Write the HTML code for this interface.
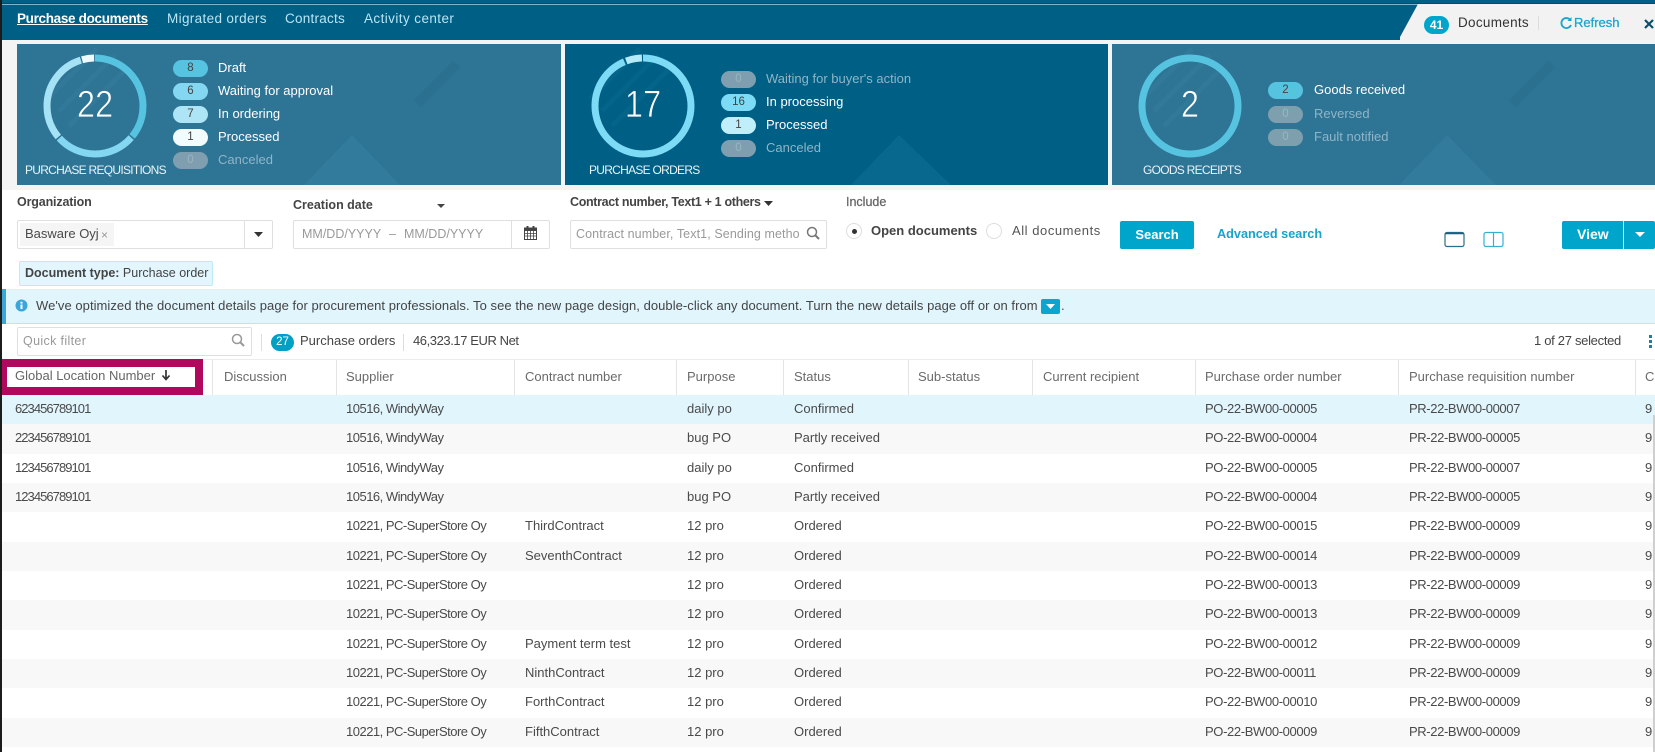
<!DOCTYPE html>
<html><head><meta charset="utf-8"><title>Purchase documents</title>
<style>
*{box-sizing:border-box}
html,body{margin:0;padding:0;width:1655px;height:752px;overflow:hidden;background:#fff}
body{font-family:"Liberation Sans",sans-serif;font-size:13px;color:#4a4a4a;position:relative}
.a,.t{position:absolute;white-space:nowrap}
.t{line-height:18px}
.panel{position:absolute;top:44px;height:141px;overflow:hidden}
.pill{position:absolute;width:35px;height:17px;border-radius:9px;text-align:center;font-size:11.5px;line-height:17px;color:#444}
.lb{position:absolute;font-size:13px;line-height:18px;color:#fff;white-space:nowrap}
.off{color:#8fb5c6}
.poff{background:#7f9fb0;color:#98b4c2}
.poff2{background:#7e9fae;color:#9cb6c3}
.big{position:absolute;width:104px;text-align:center;font-size:38px;line-height:44px;color:#fff;transform:scaleX(.86);-webkit-text-stroke:.7px #2e7495}
.cap{position:absolute;font-size:12px;line-height:16px;color:#e8f4f8;white-space:nowrap;letter-spacing:-.72px}
.b{font-weight:bold}
.inp{position:absolute;border:1px solid #dfdfdf;border-radius:2px;background:#fff}
.ph{color:#999}
.row{position:absolute;left:2px;width:1653px;height:29.33px;line-height:27px}
.row span{position:absolute;white-space:nowrap;top:0}
.c1{left:13px;letter-spacing:-.95px}.c2{left:344px;letter-spacing:-.5px}.c3{left:523px}.c4{left:685px}.c5{left:792px}.c6{left:1203px;letter-spacing:-.36px}.c7{left:1407px;letter-spacing:-.38px}.c8{left:1643px}
.alt{background:#f8f8f8}
.hd{position:absolute;top:360px;height:35px;line-height:33px;color:#6a6a6a;white-space:nowrap}
.sep{position:absolute;top:360px;height:35px;width:1px;background:#e4e4e4}
.btn{position:absolute;background:#00a5cc;color:#fff;font-weight:bold;text-align:center;border-radius:2px;font-size:13px;line-height:28px}
</style></head><body>

<!-- top header -->
<div class="a" style="left:0;top:0;width:1655px;height:40px;background:#005f85"></div>
<div class="a" style="left:0;top:3px;width:1655px;height:1px;background:#0a4a66"></div>
<div class="a" style="left:0;top:4px;width:1655px;height:1px;background:#7fb4c9"></div>
<div class="t b" style="left:17px;top:10px;color:#fff;font-size:13.5px;letter-spacing:-.32px;text-decoration:underline">Purchase documents</div>
<div class="t" style="left:167px;top:10px;color:#b8e6f5;font-size:13.5px;letter-spacing:.35px">Migrated orders</div>
<div class="t" style="left:285px;top:10px;color:#b8e6f5;font-size:13.5px;letter-spacing:.25px">Contracts</div>
<div class="t" style="left:364px;top:10px;color:#b8e6f5;font-size:13.5px;letter-spacing:.42px">Activity center</div>
<svg class="a" style="left:1395px;top:4px" width="260" height="36"><polygon points="23,0 260,0 260,36 5,36 5,33" fill="#f2f2f2"/></svg>
<div class="a" style="left:1424px;top:16px;width:25px;height:18px;border-radius:9px;background:#00a5cc;color:#fff;font-size:12px;font-weight:bold;text-align:center;line-height:18px">41</div>
<div class="t" style="left:1458px;top:14px;color:#333;font-size:13.5px;letter-spacing:.3px">Documents</div>
<div class="a" style="left:1538px;top:16px;width:1px;height:14px;background:#ddd"></div>
<svg class="a" style="left:1559px;top:16px" width="14" height="14" viewBox="0 0 14 14"><path d="M11 3.6A5 5 0 1 0 12 9" fill="none" stroke="#1ba5cc" stroke-width="1.8"/><path d="M12.5 1v4h-4z" fill="#1ba5cc"/></svg>
<div class="t" style="left:1574px;top:14px;color:#1ba5cc;font-size:13px;-webkit-text-stroke:.3px #1ba5cc">Refresh</div>
<svg class="a" style="left:1644px;top:19px" width="10" height="10"><path d="M1 1L9 9M9 1L1 9" stroke="#0f4f6e" stroke-width="2.2"/></svg>

<!-- panels bg -->
<div class="a" style="left:0;top:40px;width:1655px;height:150px;background:#f4f4f4"></div>

<div class="panel" style="left:17px;width:544px;background:#2e7495">
 <svg class="a" style="left:0;top:0" width="544" height="141">
  <polygon points="335,91 383,141 287,141" fill="#327b9c"/>
  <path d="M400 60L440 20" stroke="#2c7090" stroke-width="10"/>
  <g stroke="#327999" stroke-width="5"><path d="M30 55L80 5"/><path d="M42 67L98 11"/><path d="M52 82L108 26"/></g>
  <g fill="none" stroke-width="7" transform="rotate(-90 78 62)">
   <circle cx="78" cy="62" r="48" stroke="#56c3e0" stroke-dasharray="108.2 193.4" stroke-dashoffset="0"/>
   <circle cx="78" cy="62" r="48" stroke="#83d7f1" stroke-dasharray="81 220.6" stroke-dashoffset="-109.7"/>
   <circle cx="78" cy="62" r="48" stroke="#a6e2f5" stroke-dasharray="94.5 207.1" stroke-dashoffset="-192.2"/>
   <circle cx="78" cy="62" r="48" stroke="#eef9fd" stroke-dasharray="12.2 289.4" stroke-dashoffset="-288"/>
  </g>
 </svg>
 <div class="big" style="left:26px;top:39px">22</div>
 <div class="cap" style="left:8px;top:118px">PURCHASE REQUISITIONS</div>
 <div class="pill" style="left:156px;top:16px;background:#56c3e0">8</div><div class="lb" style="left:201px;top:15px">Draft</div>
 <div class="pill" style="left:156px;top:39px;background:#83d7f1">6</div><div class="lb" style="left:201px;top:38px">Waiting for approval</div>
 <div class="pill" style="left:156px;top:62px;background:#aee5f6">7</div><div class="lb" style="left:201px;top:61px">In ordering</div>
 <div class="pill" style="left:156px;top:85px;background:#f2fbfe">1</div><div class="lb" style="left:201px;top:84px">Processed</div>
 <div class="pill poff" style="left:156px;top:108px">0</div><div class="lb off" style="left:201px;top:107px">Canceled</div>
</div>

<div class="panel" style="left:565px;width:543px;background:#005f85">
 <svg class="a" style="left:0;top:0" width="543" height="141">
  <polygon points="334,91 386,141 286,141" fill="#08688d"/>
  <g stroke="#056489" stroke-width="5"><path d="M25 55L75 5"/><path d="M37 67L93 11"/><path d="M47 82L103 26"/></g>
  <g fill="none" stroke-width="7" transform="rotate(-90 78 62)">
   <circle cx="78" cy="62" r="48" stroke="#7ddbf5" stroke-dasharray="282 19.6" stroke-dashoffset="0"/>
   <circle cx="78" cy="62" r="48" stroke="#b5ebf9" stroke-dasharray="16 285.6" stroke-dashoffset="-284"/>
  </g>
 </svg>
 <div class="big" style="left:26px;top:39px;-webkit-text-stroke-color:#005f85">17</div>
 <div class="cap" style="left:24px;top:118px">PURCHASE ORDERS</div>
 <div class="pill poff" style="left:156px;top:27px">0</div><div class="lb off" style="left:201px;top:26px">Waiting for buyer's action</div>
 <div class="pill" style="left:156px;top:50px;background:#7ddbf5">16</div><div class="lb" style="left:201px;top:49px">In processing</div>
 <div class="pill" style="left:156px;top:73px;background:#c0eefa">1</div><div class="lb" style="left:201px;top:72px">Processed</div>
 <div class="pill poff" style="left:156px;top:96px">0</div><div class="lb off" style="left:201px;top:95px">Canceled</div>
</div>

<div class="panel" style="left:1112px;width:543px;background:#2e7495">
 <svg class="a" style="left:0;top:0" width="543" height="141">
  <polygon points="335,91 384,141 287,141" fill="#327b9c"/>
  <path d="M400 60L440 20" stroke="#2c7090" stroke-width="10"/>
  <g stroke="#327999" stroke-width="5"><path d="M30 55L80 5"/><path d="M42 67L98 11"/><path d="M52 82L108 26"/></g>
  <circle cx="78" cy="62" r="48" fill="none" stroke="#56c3e0" stroke-width="7"/>
 </svg>
 <div class="big" style="left:26px;top:39px">2</div>
 <div class="cap" style="left:31px;top:118px">GOODS RECEIPTS</div>
 <div class="pill" style="left:156px;top:38px;background:#56c3e0">2</div><div class="lb" style="left:202px;top:37px">Goods received</div>
 <div class="pill poff2" style="left:156px;top:62px">0</div><div class="lb off" style="left:202px;top:61px">Reversed</div>
 <div class="pill poff2" style="left:156px;top:85px">0</div><div class="lb off" style="left:202px;top:84px">Fault notified</div>
</div>

<!-- filters -->
<div class="t b" style="left:17px;top:193px;color:#444;font-size:12.5px;letter-spacing:-.15px">Organization</div>
<div class="inp" style="left:17px;top:220px;width:256px;height:29px"></div>
<div class="a" style="left:20px;top:223px;width:94px;height:23px;background:#f5f5f5"></div>
<div class="t" style="left:25px;top:225px">Basware Oyj</div>
<div class="t" style="left:101px;top:226px;color:#999;font-size:12px">×</div>
<div class="a" style="left:244px;top:221px;width:1px;height:27px;background:#dfdfdf"></div>
<svg class="a" style="left:254px;top:232px" width="9" height="5"><path d="M0 0H9L4.5 5z" fill="#333"/></svg>

<div class="t b" style="left:293px;top:196px;color:#444;font-size:12.5px">Creation date</div>
<svg class="a" style="left:437px;top:204px" width="8" height="4"><path d="M0 0H8L4 4z" fill="#444"/></svg>
<div class="inp" style="left:293px;top:220px;width:257px;height:29px"></div>
<div class="t ph" style="left:302px;top:225px;font-size:12.5px">MM/DD/YYYY</div>
<div class="t ph" style="left:389px;top:225px;font-size:12.5px">–</div>
<div class="t ph" style="left:404px;top:225px;font-size:12.5px">MM/DD/YYYY</div>
<div class="a" style="left:511px;top:221px;width:1px;height:27px;background:#dfdfdf"></div>
<svg class="a" style="left:524px;top:226px" width="13" height="14" viewBox="0 0 13 14"><rect x=".5" y="2" width="12" height="11.5" fill="#fff" stroke="#444"/><rect x="0" y="2" width="13" height="3" fill="#444"/><rect x="2.5" y="0" width="2" height="3" fill="#444"/><rect x="8.5" y="0" width="2" height="3" fill="#444"/><path d="M1 7.500H12M1 10H12M3.500 5V13M6.500 5V13M9.500 5V13" stroke="#444" stroke-width=".8"/></svg>

<div class="t b" style="left:570px;top:193px;color:#444;font-size:12.5px;letter-spacing:-.33px">Contract number, Text1 + 1 others</div>
<svg class="a" style="left:764px;top:201px" width="9" height="5"><path d="M0 0H9L4.5 5z" fill="#333"/></svg>
<div class="inp" style="left:570px;top:220px;width:257px;height:29px"></div>
<div class="t ph" style="left:576px;top:225px;width:225px;overflow:hidden;font-size:12.5px;letter-spacing:.1px">Contract number, Text1, Sending metho</div>
<svg class="a" style="left:806px;top:226px" width="14" height="14"><circle cx="6" cy="6" r="4.500" fill="none" stroke="#777" stroke-width="1.500"/><path d="M9.500 9.500L13 13" stroke="#777" stroke-width="2"/></svg>

<div class="t" style="left:846px;top:193px;color:#666;font-size:12.5px;-webkit-text-stroke:.25px #666">Include</div>
<div class="a" style="left:846px;top:223px;width:16px;height:16px;border:1px solid #ddd;border-radius:50%"></div>
<div class="a" style="left:851.500px;top:228.500px;width:5px;height:5px;background:#333;border-radius:50%"></div>
<div class="t b" style="left:871px;top:222px;color:#444;font-size:13px">Open documents</div>
<div class="a" style="left:986px;top:223px;width:16px;height:16px;border:1px solid #ddd;border-radius:50%"></div>
<div class="t" style="left:1012px;top:222px;color:#555;font-size:13px;letter-spacing:.55px">All documents</div>

<div class="btn" style="left:1120px;top:221px;width:74px;height:28px">Search</div>
<div class="t b" style="left:1217px;top:225px;color:#1ba2c9;font-size:12.7px">Advanced search</div>
<svg class="a" style="left:1444px;top:231px" width="21" height="17"><rect x="1" y="1.500" width="19" height="14" rx="2" fill="none" stroke="#2d6b8a" stroke-width="1.200"/><path d="M1 2.500H20" stroke="#1d5c7e" stroke-width="1.500"/></svg>
<svg class="a" style="left:1483px;top:231px" width="21" height="17"><rect x="1" y="1.500" width="19" height="14" rx="2" fill="none" stroke="#35b0d0" stroke-width="1.200"/><path d="M10.500 1.500V15.500" stroke="#35b0d0" stroke-width="1.200"/></svg>
<div class="btn" style="left:1562px;top:221px;width:93px;height:28px"></div>
<div class="t b" style="left:1577px;top:225px;color:#fff;font-size:14px">View</div>
<div class="a" style="left:1623px;top:221px;width:1px;height:28px;background:#e8f8fc"></div>
<svg class="a" style="left:1635px;top:232px" width="10" height="5"><path d="M0 0H10L5 5z" fill="#fff"/></svg>

<div class="a" style="left:19px;top:261px;width:194px;height:25px;background:#e3f6fd;border:1px solid #c0e9f6;border-radius:2px"></div>
<div class="t" style="left:25px;top:263.500px;color:#444;font-size:12.5px"><b>Document type:</b> Purchase order</div>

<!-- info bar -->
<div class="a" style="left:2px;top:289px;width:1653px;height:35px;background:#e1f5fd;border-top:1px solid #ececec;border-bottom:1px solid #bfe3f2"></div>
<div class="a" style="left:2px;top:289px;width:4px;height:35px;background:#3da6d8"></div>
<svg class="a" style="left:15px;top:299px" width="13" height="13"><circle cx="6.500" cy="6.500" r="6" fill="#3da6d8"/><rect x="5.500" y="5.500" width="2" height="4.500" fill="#fff"/><rect x="5.500" y="2.800" width="2" height="1.800" fill="#fff"/></svg>
<div class="t" style="left:36px;top:296.500px;color:#444;font-size:13px;letter-spacing:.05px">We've optimized the document details page for procurement professionals. To see the new page design, double-click any document. Turn the new details page off or on from</div>
<div class="a" style="left:1041px;top:299px;width:19px;height:15px;background:#0ba5cf;border-radius:2px"></div>
<svg class="a" style="left:1046px;top:304px" width="9" height="5"><path d="M0 0H9L4.500 5z" fill="#fff"/></svg>
<div class="t" style="left:1061px;top:296.500px;color:#444">.</div>

<!-- toolbar -->
<div class="inp" style="left:17px;top:327px;width:235px;height:29px"></div>
<div class="t ph" style="left:23px;top:332px;font-size:12.500px;letter-spacing:.35px">Quick filter</div>
<svg class="a" style="left:231px;top:333px" width="14" height="14"><circle cx="6" cy="6" r="4.500" fill="none" stroke="#999" stroke-width="1.500"/><path d="M9.500 9.500L13 13" stroke="#999" stroke-width="2"/></svg>
<div class="a" style="left:261px;top:334px;width:1px;height:17px;background:#ddd"></div>
<div class="a" style="left:271px;top:334px;width:23px;height:17px;border-radius:9px;background:#00a0c6;color:#fff;font-size:11.500px;text-align:center;line-height:17px">27</div>
<div class="t" style="left:300px;top:332px;color:#444">Purchase orders</div>
<div class="a" style="left:403px;top:334px;width:1px;height:17px;background:#ddd"></div>
<div class="t" style="left:413px;top:332px;color:#444;letter-spacing:-.42px">46,323.17 EUR Net</div>
<div class="t" style="left:1534px;top:332px;color:#444;letter-spacing:-.3px">1 of 27 selected</div>
<div class="a" style="left:1649px;top:335px;width:3px;height:3px;background:#1a7fa5"></div>
<div class="a" style="left:1649px;top:340px;width:3px;height:3px;background:#1a7fa5"></div>
<div class="a" style="left:1649px;top:345px;width:3px;height:3px;background:#1a7fa5"></div>

<!-- table header -->
<div class="a" style="left:2px;top:359px;width:1653px;height:1px;background:#ececec"></div>
<div class="a" style="left:0;top:359px;width:203px;height:36px;background:#b0085c"></div>
<div class="a" style="left:7px;top:367px;width:188px;height:20px;background:#fff"></div>
<div class="t" style="left:15px;top:367px;color:#666">Global Location Number</div>
<svg class="a" style="left:161px;top:369px" width="10" height="12"><path d="M5 1V10M1.500 6.500L5 10.500L8.500 6.500" fill="none" stroke="#333" stroke-width="1.700"/></svg>
<div class="sep" style="left:212px"></div><div class="sep" style="left:336px"></div><div class="sep" style="left:514px"></div><div class="sep" style="left:676px"></div><div class="sep" style="left:783px"></div><div class="sep" style="left:908px"></div><div class="sep" style="left:1032px"></div><div class="sep" style="left:1195px"></div><div class="sep" style="left:1398px"></div><div class="sep" style="left:1635px"></div>
<div class="hd" style="left:224px">Discussion</div>
<div class="hd" style="left:346px">Supplier</div>
<div class="hd" style="left:525px">Contract number</div>
<div class="hd" style="left:687px">Purpose</div>
<div class="hd" style="left:794px">Status</div>
<div class="hd" style="left:918px">Sub-status</div>
<div class="hd" style="left:1043px">Current recipient</div>
<div class="hd" style="left:1205px">Purchase order number</div>
<div class="hd" style="left:1409px">Purchase requisition number</div>
<div class="hd" style="left:1645px">Cr</div>

<!-- rows -->
<div class="row" style="top:395px;background:#e1f5fd"><span class="c1">623456789101</span><span class="c2">10516, WindyWay</span><span class="c4">daily po</span><span class="c5">Confirmed</span><span class="c6">PO-22-BW00-00005</span><span class="c7">PR-22-BW00-00007</span><span class="c8">9</span></div>
<div class="row alt" style="top:424.330px"><span class="c1">223456789101</span><span class="c2">10516, WindyWay</span><span class="c4">bug PO</span><span class="c5">Partly received</span><span class="c6">PO-22-BW00-00004</span><span class="c7">PR-22-BW00-00005</span><span class="c8">9</span></div>
<div class="row" style="top:453.660px"><span class="c1">123456789101</span><span class="c2">10516, WindyWay</span><span class="c4">daily po</span><span class="c5">Confirmed</span><span class="c6">PO-22-BW00-00005</span><span class="c7">PR-22-BW00-00007</span><span class="c8">9</span></div>
<div class="row alt" style="top:483px"><span class="c1">123456789101</span><span class="c2">10516, WindyWay</span><span class="c4">bug PO</span><span class="c5">Partly received</span><span class="c6">PO-22-BW00-00004</span><span class="c7">PR-22-BW00-00005</span><span class="c8">9</span></div>
<div class="row" style="top:512.330px"><span class="c2">10221, PC-SuperStore Oy</span><span class="c3">ThirdContract</span><span class="c4">12 pro</span><span class="c5">Ordered</span><span class="c6">PO-22-BW00-00015</span><span class="c7">PR-22-BW00-00009</span><span class="c8">9</span></div>
<div class="row alt" style="top:541.660px"><span class="c2">10221, PC-SuperStore Oy</span><span class="c3">SeventhContract</span><span class="c4">12 pro</span><span class="c5">Ordered</span><span class="c6">PO-22-BW00-00014</span><span class="c7">PR-22-BW00-00009</span><span class="c8">9</span></div>
<div class="row" style="top:571px"><span class="c2">10221, PC-SuperStore Oy</span><span class="c4">12 pro</span><span class="c5">Ordered</span><span class="c6">PO-22-BW00-00013</span><span class="c7">PR-22-BW00-00009</span><span class="c8">9</span></div>
<div class="row alt" style="top:600.330px"><span class="c2">10221, PC-SuperStore Oy</span><span class="c4">12 pro</span><span class="c5">Ordered</span><span class="c6">PO-22-BW00-00013</span><span class="c7">PR-22-BW00-00009</span><span class="c8">9</span></div>
<div class="row" style="top:629.660px"><span class="c2">10221, PC-SuperStore Oy</span><span class="c3">Payment term test</span><span class="c4">12 pro</span><span class="c5">Ordered</span><span class="c6">PO-22-BW00-00012</span><span class="c7">PR-22-BW00-00009</span><span class="c8">9</span></div>
<div class="row alt" style="top:659px"><span class="c2">10221, PC-SuperStore Oy</span><span class="c3">NinthContract</span><span class="c4">12 pro</span><span class="c5">Ordered</span><span class="c6">PO-22-BW00-00011</span><span class="c7">PR-22-BW00-00009</span><span class="c8">9</span></div>
<div class="row" style="top:688.330px"><span class="c2">10221, PC-SuperStore Oy</span><span class="c3">ForthContract</span><span class="c4">12 pro</span><span class="c5">Ordered</span><span class="c6">PO-22-BW00-00010</span><span class="c7">PR-22-BW00-00009</span><span class="c8">9</span></div>
<div class="row alt" style="top:717.660px"><span class="c2">10221, PC-SuperStore Oy</span><span class="c3">FifthContract</span><span class="c4">12 pro</span><span class="c5">Ordered</span><span class="c6">PO-22-BW00-00009</span><span class="c7">PR-22-BW00-00009</span><span class="c8">9</span></div>

<div class="a" style="left:1653px;top:415px;width:2px;height:337px;background:#cfcfcf"></div>
<div class="a" style="left:0;top:0;width:2px;height:752px;background:#1c1c1c"></div>
</body></html>
